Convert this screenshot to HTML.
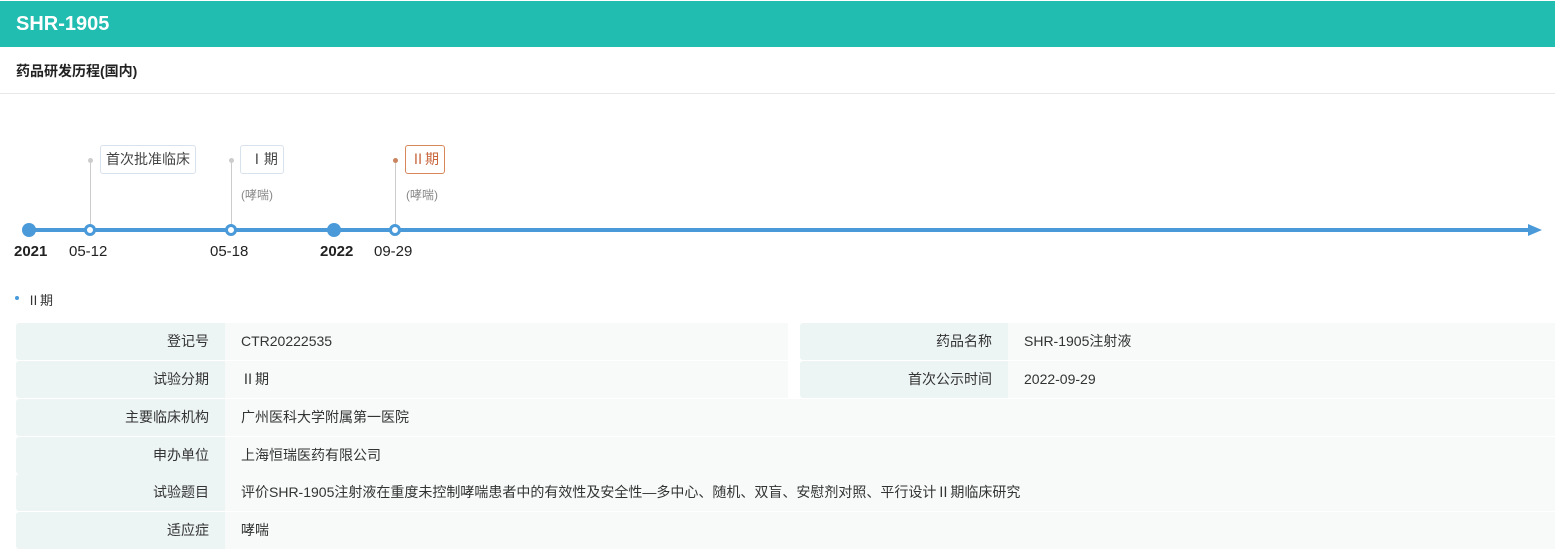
<!DOCTYPE html>
<html><head><meta charset="utf-8"><style>
*{margin:0;padding:0;box-sizing:border-box}
body{width:1555px;height:548px;background:#fff;font-family:"Liberation Sans","Noto Sans CJK SC",sans-serif;position:relative;overflow:hidden;color:#333}
.hdr{position:absolute;left:0;top:1px;width:1555px;height:46px;background:#20bdb0;color:#fff;font-weight:bold;font-size:20px;line-height:46px;padding-left:16px}
.sub{position:absolute;left:0;top:48px;width:1555px;height:46px;border-bottom:1px solid #e8e8e8;font-weight:bold;font-size:14px;line-height:46px;padding-left:16px;color:#222}
.a{position:absolute}
.line{left:29px;top:228px;width:1502px;height:4px;background:#4a9ad9}
.arrow{left:1528px;top:224px;width:0;height:0;border-top:6px solid transparent;border-bottom:6px solid transparent;border-left:14px solid #4a9ad9}
.big{width:14px;height:14px;border-radius:50%;background:#4a9ad9;top:223px}
.sm{width:12px;height:12px;border-radius:50%;background:#fff;border:3px solid #4a9ad9;top:224px}
.stem{width:1px;background:#ccc}
.dot{width:5px;height:5px;border-radius:50%;background:#ccc}
.tag{border:1px solid #d8e2ec;border-radius:3px;height:29px;line-height:27px;font-size:14px;padding:0 5px;color:#444;background:#fff}
.note{font-size:12px;color:#888}
.yr{font-weight:bold;font-size:15px;color:#222;top:243px}
.dt{font-size:15px;color:#222;top:243px}
.c{position:absolute;height:37px;font-size:14px;line-height:37px;color:#333}
.l{background:#edf5f4;text-align:right;padding-right:16px;border-radius:3px 0 0 3px}
.v{background:#f7faf9;padding-left:16px}
</style></head><body>
<div class="hdr">SHR-1905</div>
<div class="sub">药品研发历程(国内)</div>

<div class="a line"></div><div class="a arrow"></div>
<div class="a big" style="left:22px"></div>
<div class="a big" style="left:327px"></div>
<div class="a stem" style="left:90px;top:160px;height:66px"></div>
<div class="a dot" style="left:88px;top:158px"></div>
<div class="a stem" style="left:231px;top:160px;height:66px"></div>
<div class="a dot" style="left:229px;top:158px"></div>
<div class="a stem" style="left:395px;top:160px;height:66px"></div>
<div class="a dot" style="left:393px;top:158px;background:#c98560"></div>
<div class="a sm" style="left:84px"></div>
<div class="a sm" style="left:225px"></div>
<div class="a sm" style="left:389px"></div>
<div class="a tag" style="left:100px;top:145px">首次批准临床</div>
<div class="a tag" style="left:240px;top:145px">&nbsp;Ⅰ期</div>
<div class="a note" style="left:241px;top:186px">(哮喘)</div>
<div class="a tag" style="left:405px;top:145px;border-color:#d8875a;color:#c8643a">Ⅱ期</div>
<div class="a note" style="left:406px;top:186px">(哮喘)</div>
<div class="a yr" style="left:14px">2021</div>
<div class="a dt" style="left:69px">05-12</div>
<div class="a dt" style="left:210px">05-18</div>
<div class="a yr" style="left:320px">2022</div>
<div class="a dt" style="left:374px">09-29</div>

<div class="a" style="left:15px;top:296px;width:4px;height:4px;border-radius:50%;background:#4a9ad9"></div>
<div class="a" style="left:27px;top:290px;font-size:13px;color:#333">Ⅱ期</div>

<div class="c l" style="left:16px;top:323px;width:209px">登记号</div>
<div class="c v" style="left:225px;top:323px;width:563px">CTR20222535</div>
<div class="c l" style="left:800px;top:323px;width:208px">药品名称</div>
<div class="c v" style="left:1008px;top:323px;width:547px">SHR-1905注射液</div>
<div class="c l" style="left:16px;top:361px;width:209px">试验分期</div>
<div class="c v" style="left:225px;top:361px;width:563px">Ⅱ期</div>
<div class="c l" style="left:800px;top:361px;width:208px">首次公示时间</div>
<div class="c v" style="left:1008px;top:361px;width:547px">2022-09-29</div>
<div class="c l" style="left:16px;top:399px;width:209px">主要临床机构</div>
<div class="c v" style="left:225px;top:399px;width:1330px">广州医科大学附属第一医院</div>
<div class="c l" style="left:16px;top:437px;width:209px">申办单位</div>
<div class="c v" style="left:225px;top:437px;width:1330px">上海恒瑞医药有限公司</div>
<div class="c l" style="left:16px;top:474px;width:209px">试验题目</div>
<div class="c v" style="left:225px;top:474px;width:1330px">评价SHR-1905注射液在重度未控制哮喘患者中的有效性及安全性—多中心、随机、双盲、安慰剂对照、平行设计Ⅱ期临床研究</div>
<div class="c l" style="left:16px;top:512px;width:209px">适应症</div>
<div class="c v" style="left:225px;top:512px;width:1330px">哮喘</div>
</body></html>
